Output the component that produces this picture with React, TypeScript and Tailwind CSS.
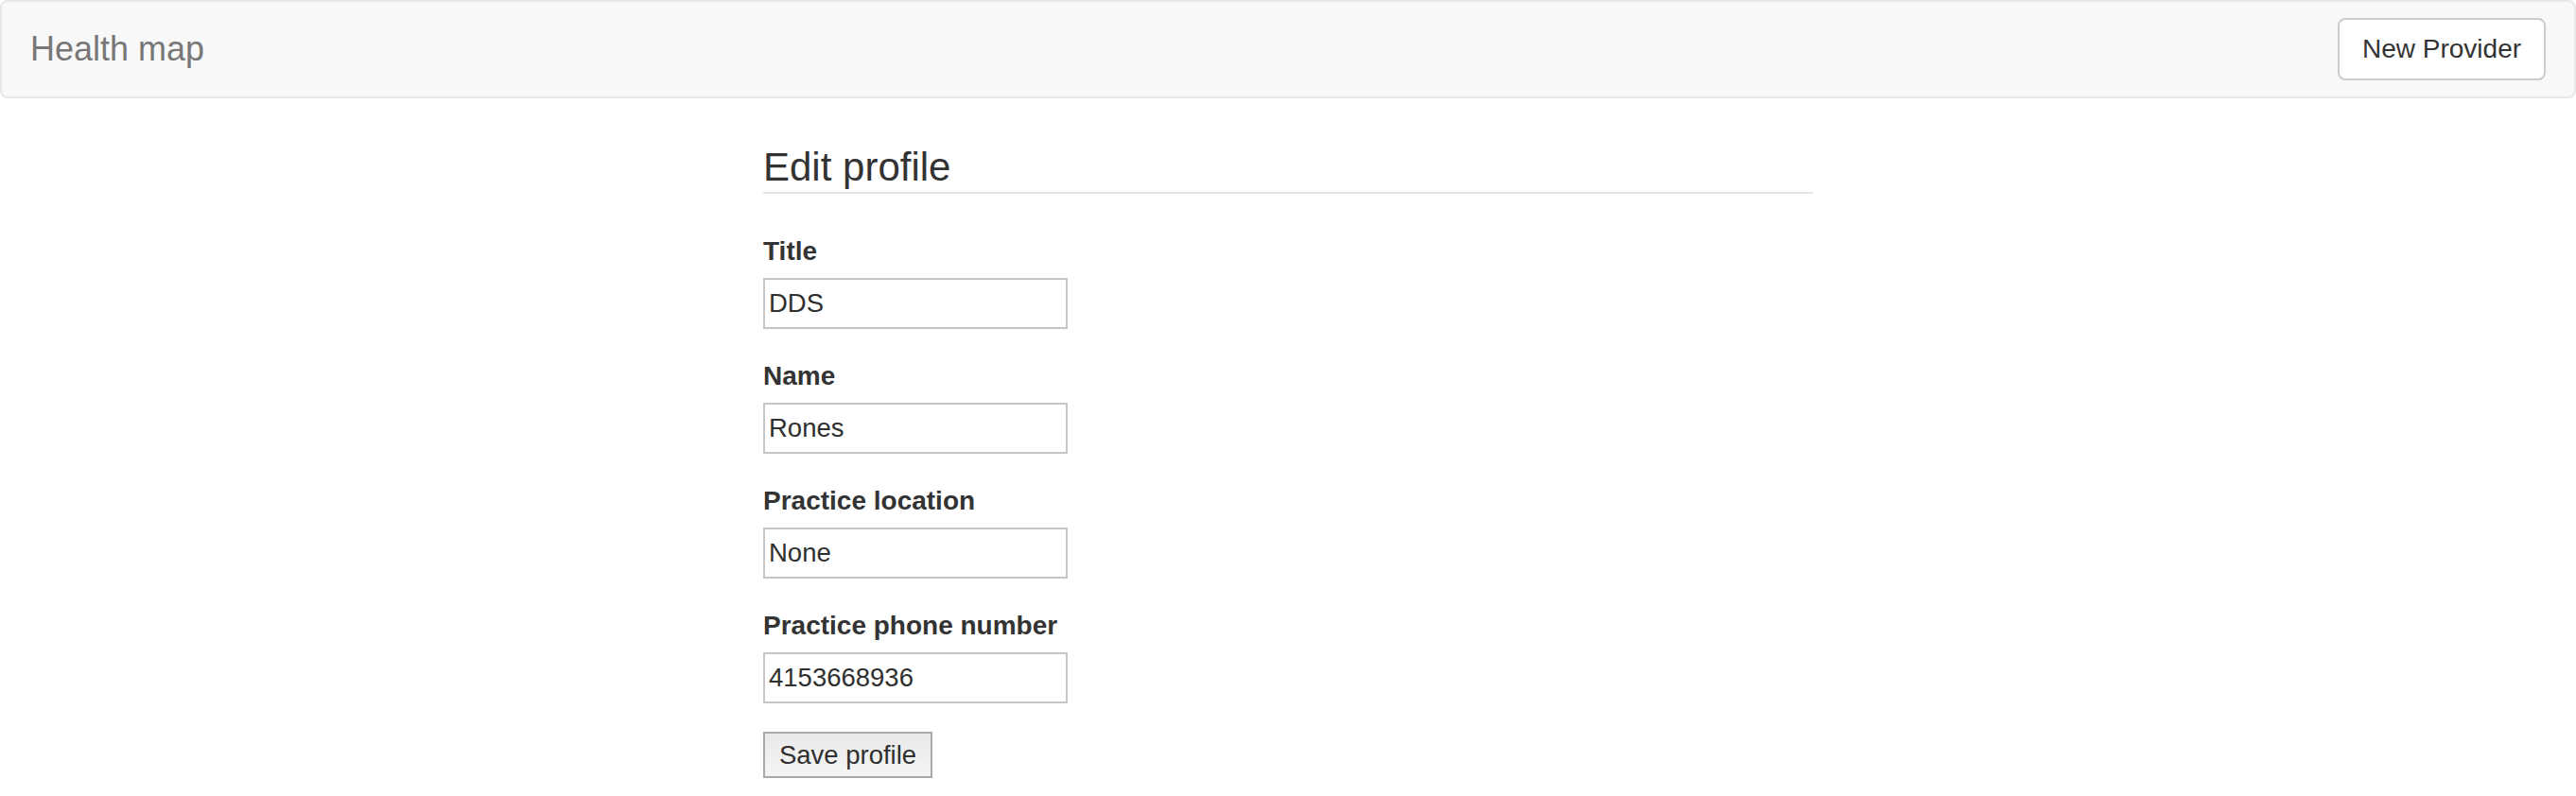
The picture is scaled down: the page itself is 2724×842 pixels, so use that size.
import React from 'react';

const FONT = 'font-["Liberation_Sans",Arial,sans-serif]';

const fields = [
  { label: 'Title', value: 'DDS' },
  { label: 'Name', value: 'Rones' },
  { label: 'Practice location', value: 'None' },
  { label: 'Practice phone number', value: '4153668936' },
];

function Navbar() {
  return (
    <nav className="h-[104px] bg-[#f8f8f8] border-2 border-[#e7e7e7] rounded-[8px] flex justify-between items-start">
      <a className="px-[30px] py-[30px] text-[36px] leading-[40px] text-[#777]">Health map</a>
      <div className="pr-[30px]">
        <button className="mt-[17px] h-[66px] w-[220px] bg-white border-2 border-[#ccc] rounded-[8px] text-[28px] leading-[40px] text-[#333]">
          New Provider
        </button>
      </div>
    </nav>
  );
}

export default function App() {
  return (
    <div className={`${FONT} bg-white min-h-[842px] text-[#333]`}>
      <Navbar />
      <main className="w-[1110px] mx-auto pt-[50px]">
        {/* Header */}
        <h3 className="text-[42px] leading-[46px] pb-[3px] border-b-2 border-[#e6e6e6] text-[#333]">
          Edit profile
        </h3>

        <form className="pt-[41px]" onSubmit={e => e.preventDefault()}>
          {fields.map(f => (
            <div key={f.label} className="mb-[30px]">
              <label className="block text-[28px] leading-[40px] font-bold mb-[8px]">{f.label}</label>
              <input
                defaultValue={f.value}
                className="block w-[322px] h-[54px] border-2 border-[#c6c6c6] px-[4px] text-[27.5px] text-[#2f2f2f] outline-none"
              />
            </div>
          ))}
          <button
            type="submit"
            className="w-[179px] h-[49px] border-2 border-[#a9a9a9] bg-gradient-to-b from-[#e9e9e9] to-[#f5f5f5] text-[27.5px] text-[#2f2f2f]"
          >
            Save profile
          </button>
        </form>
      </main>
    </div>
  );
}
